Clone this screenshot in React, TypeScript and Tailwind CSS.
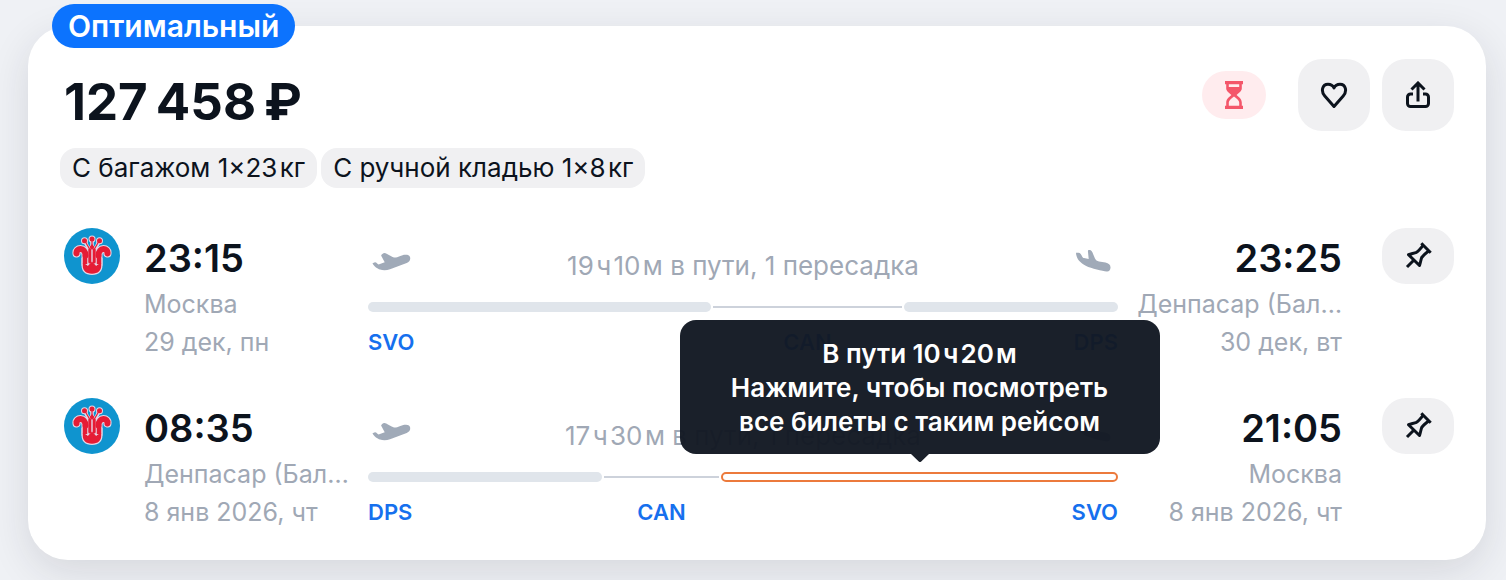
import React from 'react';

type Segment = {
  kind: 'flight' | 'layover';
  share: number;
  code: string;
  active?: boolean;
};

type Point = {
  time: string;
  city: string;
  date: string;
};

type Flight = {
  from: Point;
  to: Point;
  summary: string;
  segments: Segment[];
};

const flights: Flight[] = [
  {
    from: { time: '23:15', city: 'Москва', date: '29 дек, пн' },
    to: { time: '23:25', city: 'Денпасар (Бал…', date: '30 дек, вт' },
    summary: '19\u200Aч\u200A10\u200Aм в пути, 1 пересадка',
    segments: [
      { kind: 'flight', share: 343, code: 'SVO' },
      { kind: 'layover', share: 189, code: 'CAN' },
      { kind: 'flight', share: 214, code: 'DPS' },
    ],
  },
  {
    from: { time: '08:35', city: 'Денпасар (Бал…', date: '8 янв 2026, чт' },
    to: { time: '21:05', city: 'Москва', date: '8 янв 2026, чт' },
    summary: '17\u200Aч\u200A30\u200Aм в пути, 1 пересадка',
    segments: [
      { kind: 'flight', share: 234, code: 'DPS' },
      { kind: 'layover', share: 115, code: 'CAN' },
      { kind: 'flight', share: 397, code: 'SVO', active: true },
    ],
  },
];

const HourglassIcon = () => (
  <svg className="w-[18px] h-7" viewBox="0 0 18 28" fill="currentColor">
    <path d="M0 0h18v3.200H0zM0 24.800h18V28H0z" />
    <path d="M1.200 3h2.600v3h10.400V3h2.600v4.600c0 2.600-3.200 4.600-5.200 6.400 2 1.800 5.200 4 5.200 7.400V25h-2.600v-3.400c0-2.400-2.600-4.200-5.200-6.200-2.600 2-5.200 3.800-5.200 6.200V25H1.200v-3.600c0-3.400 3.200-5.600 5.200-7.400-2-1.800-5.200-3.800-5.200-6.400z" />
  </svg>
);

const HeartIcon = () => (
  <svg className="w-7 h-7" viewBox="0 0 28 28" fill="none" stroke="currentColor" strokeWidth={3} strokeLinejoin="round">
    <path d="M14 25.500 4.800 15C0.600 10.200 2.200 3.300 8 3.300c2.800 0 5 1.500 6 3.700 1-2.200 3.200-3.700 6-3.700 5.800 0 7.400 6.900 3.200 11.700z" />
  </svg>
);

const ShareIcon = () => (
  <svg className="w-7 h-7" viewBox="0 0 28 28" fill="none" stroke="currentColor" strokeWidth={3}>
    <path d="M9 13H6.500a3 3 0 0 0-3 3v6.500a3 3 0 0 0 3 3h15a3 3 0 0 0 3-3V16a3 3 0 0 0-3-3H19" />
    <path d="M14 20.500V2.500M7.500 8.500 14 2l6.500 6.500" />
  </svg>
);

const PinIcon = () => (
  <svg className="w-8 h-8" viewBox="0 0 32 32" fill="none" stroke="currentColor" strokeWidth={3} strokeLinejoin="round">
    <path d="M21.500 4.800C19 8 16.500 11 14.500 12.300 12 13.200 9 13.800 6.500 14.700L17.500 25.500C18.400 23 18.800 20 19.700 17.500 21.500 15 24 13 27.200 10.500" />
    <path d="M19.300 3.300 28.700 12.700M11.500 20.500 5 27" />
  </svg>
);

const TakeoffIcon = () => (
  <svg className="w-10 h-6" viewBox="0 -2 40 24" fill="currentColor">
    <path d="M.5 13.200 3 12.200c1.600 0 2.400 1.600 3.600 2.300l6.100-2.200-3.500-6.600c-.3-.9 2-2.700 3.300-2.700 1.500 0 7 3.700 9.500 4.500 3 .8 6.500-2.700 12-2.700 2.500 0 4 1.200 4.200 3 .3 2.500-1.200 4.200-3.500 5.200L18 19.300c-3 1-7 1.200-10 .2-2.500-.8-6.500-3.500-7.500-6.300z" />
  </svg>
);

const LandingIcon = () => (
  <svg className="w-10 h-6" viewBox="0 0 40 24" fill="currentColor">
    <path d="M2 4.700h2.500c1.800 0 2.500 1.500 3.500 3.500.6 1.200 1 1.600 2 1.900l4.700.9-.7-7c-.2-1.300.1-2 1-2 1.700 0 2.500.5 3.500 2.600l2.500 6c.7 1.600 2 2.500 4 2.900l6.500 1.100c3.200.6 5.200 2.400 5 5.200-.2 2.700-1.700 4.100-4 3.700-3.500-.5-15.500-3.100-20.300-5.500C5.500 14.400 2.200 10.400 2 4.700z" />
  </svg>
);

const AirlineLogo = () => (
  <svg className="w-14 h-14 shrink-0" viewBox="0 0 56 56">
    <circle cx="28" cy="28" r="28" fill="#0f94cf" />
    {/* белый контур цветка */}
    <g fill="none" stroke="#e6d8e8" strokeLinecap="round" strokeLinejoin="round">
      <path d="M12.500 25.500C11.500 20 21.500 18.500 21.500 27.500V36M43.500 25.500C44.500 20 34.500 18.500 34.500 27.500V36" strokeWidth="8" />
      <path d="M25 22 20.800 13M31 22l4.200-9M28 20V12" strokeWidth="3.500" />
      <path d="M17.500 30V37.500C17.500 43 21 47 28 47S38.500 43 38.500 37.500V30z" fill="#e6d8e8" stroke="none" />
      <path d="M28 15.500 33 21v10H23V21z" fill="#e6d8e8" stroke="none" />
      <circle cx="20.500" cy="12.800" r="3.500" fill="#e6d8e8" stroke="none" />
      <circle cx="28" cy="11" r="3.500" fill="#e6d8e8" stroke="none" />
      <circle cx="35.500" cy="12.800" r="3.500" fill="#e6d8e8" stroke="none" />
    </g>
    <g fill="none" stroke="#e51c35" strokeLinecap="round" strokeLinejoin="round">
      <path d="M12.500 25.500C11.500 20 21.500 18.500 21.500 27.500" strokeWidth="6" />
      <path d="M43.500 25.500C44.500 20 34.500 18.500 34.500 27.500" strokeWidth="6" />
      <path d="M21 27V36M35 27V36" strokeWidth="4.500" strokeLinecap="butt" />
      <path d="M25.800 21.500V34M30.200 21.500V34" strokeWidth="3" />
      <path d="M25 20 21.500 14M31 20l3.500-6M28 18V13" strokeWidth="1.200" />
    </g>
    <g fill="#e51c35">
      <circle cx="20.500" cy="12.800" r="2.500" />
      <circle cx="28" cy="11" r="2.500" />
      <circle cx="35.500" cy="12.800" r="2.500" />
      <path d="M28 16 30.500 19 28 22 25.500 19z" />
      <path d="M18.800 35.500c2 .3 3.800 1.200 5 2.500l4.200-4.500 4.200 4.500c1.200-1.300 3-2.200 5-2.500v2.300c0 4.700-3 7.900-9.200 7.900s-9.200-3.200-9.200-7.900z" />
    </g>
  </svg>
);

const Tooltip = () => (
  <div
    role="tooltip"
    className="absolute z-10 bottom-full left-1/2 -translate-x-1/2 mb-[18px] w-[480px] pt-[17px] pb-[15px] rounded-2xl bg-[#131923]/97 text-white text-[26px] leading-[34px] font-semibold text-center"
  >
    <p>{'В пути 10\u200Aч\u200A20\u200Aм'}</p>
    <p>Нажмите, чтобы посмотреть</p>
    <p>все билеты с таким рейсом</p>
    <svg className="absolute top-full left-1/2 -translate-x-1/2 w-[18px] h-2" viewBox="0 0 18 8" fill="#1a202a">
      <path d="M0 0h18l-7.500 7.200a2 2 0 0 1-3 0z" />
    </svg>
  </div>
);

const SegmentBar: React.FC<{ segment: Segment; last: boolean }> = ({ segment, last }) => (
  <div className="basis-0 min-w-0" style={{ flexGrow: segment.share }}>
    <div className="relative h-[10px] flex items-center">
      {segment.kind === 'layover' ? (
        <div className="w-full h-[2px] bg-[#cdd2db]"></div>
      ) : (
        <button
          type="button"
          aria-label={segment.code}
          className={`w-full h-full rounded-full ${
            segment.active ? 'bg-white border-2 border-[#ec7a3c]' : 'bg-[#e0e5eb]'
          }`}
        ></button>
      )}
      {segment.active && <Tooltip />}
    </div>
    <div
      className={`mt-[11px] flex ${
        segment.kind === 'layover' ? 'justify-center' : last ? 'justify-end' : 'justify-start'
      }`}
    >
      <a href="#" className="text-[22px] leading-[38px] font-semibold text-[#1670ee]">
        {segment.code}
      </a>
    </div>
  </div>
);

const PointInfo: React.FC<{ point: Point; right?: boolean }> = ({ point, right }) => (
  <div className={`w-[208px] shrink-0 pt-[3px] text-[25px] leading-[38px] text-[#a0a8b5] ${right ? 'text-right' : ''}`}>
    <p className="text-[38px] leading-[54px] font-semibold text-[#0c131d]">{point.time}</p>
    <p className="whitespace-nowrap">{point.city}</p>
    <p>{point.date}</p>
  </div>
);

const FlightRow: React.FC<{ flight: Flight }> = ({ flight }) => (
  <div className="flex items-start">
    <AirlineLogo />
    <div className="flex flex-1 min-w-0 gap-4 ml-6 mr-10">
      <PointInfo point={flight.from} />
      <div className="flex-1 min-w-0">
        <div className="h-[74px] pt-5 px-1 flex items-start justify-between text-[#a0aab8]">
          <TakeoffIcon />
          <p className="text-[26px] leading-9 text-[#a0a8b5] whitespace-nowrap">{flight.summary}</p>
          <LandingIcon />
        </div>
        <div className="flex gap-[2px]">
          {flight.segments.map((segment, index) => (
            <SegmentBar key={index} segment={segment} last={index === flight.segments.length - 1} />
          ))}
        </div>
      </div>
      <PointInfo point={flight.to} right />
    </div>
    <button
      type="button"
      aria-label="Закрепить"
      className="w-[72px] h-14 shrink-0 rounded-3xl bg-[#f0f0f2] flex items-center justify-center"
    >
      <PinIcon />
    </button>
  </div>
);

const App: React.FC = () => {
  return (
    <div className="min-h-screen bg-[#eff1f5] pt-[26px] pb-5 pl-7 pr-5 font-['Inter','Liberation_Sans',sans-serif] text-[#0c131d]">
      <article className="relative bg-white rounded-[40px] shadow-[0_12px_40px_rgba(30,35,50,0.12)] pt-[33px] pb-[29px] pl-9 pr-8">
        <span className="absolute left-6 -top-[22px] h-11 px-4 rounded-full bg-[#0c73fe] text-white text-[30px] leading-[44px] font-semibold">
          Оптимальный
        </span>

        {/* Цена и действия */}
        <header className="flex items-start justify-between">
          <h2 className="text-[51px] leading-[86px] font-bold">{'127\u2009458\u2009₽'}</h2>
          <div className="flex items-center gap-3">
            <div className="w-16 h-12 mr-5 rounded-full bg-[#ffecee] text-[#f4566a] flex items-center justify-center">
              <HourglassIcon />
            </div>
            <button
              type="button"
              aria-label="В избранное"
              className="w-[72px] h-[72px] rounded-3xl bg-[#f0f0f2] flex items-center justify-center"
            >
              <HeartIcon />
            </button>
            <button
              type="button"
              aria-label="Поделиться"
              className="w-[72px] h-[72px] rounded-3xl bg-[#f0f0f2] flex items-center justify-center"
            >
              <ShareIcon />
            </button>
          </div>
        </header>

        {/* Багаж */}
        <ul className="flex gap-1 mt-[3px] -ml-1 text-[26px] leading-10">
          <li className="px-3 rounded-2xl bg-[#f0f0f2]">{'С багажом 1×23\u200Aкг'}</li>
          <li className="px-3 rounded-2xl bg-[#f0f0f2]">{'С ручной кладью 1×8\u200Aкг'}</li>
        </ul>

        {/* Рейсы */}
        <div className="mt-10 flex flex-col gap-[37px]">
          {flights.map((flight, index) => (
            <FlightRow key={index} flight={flight} />
          ))}
        </div>
      </article>
    </div>
  );
};

export default App;
